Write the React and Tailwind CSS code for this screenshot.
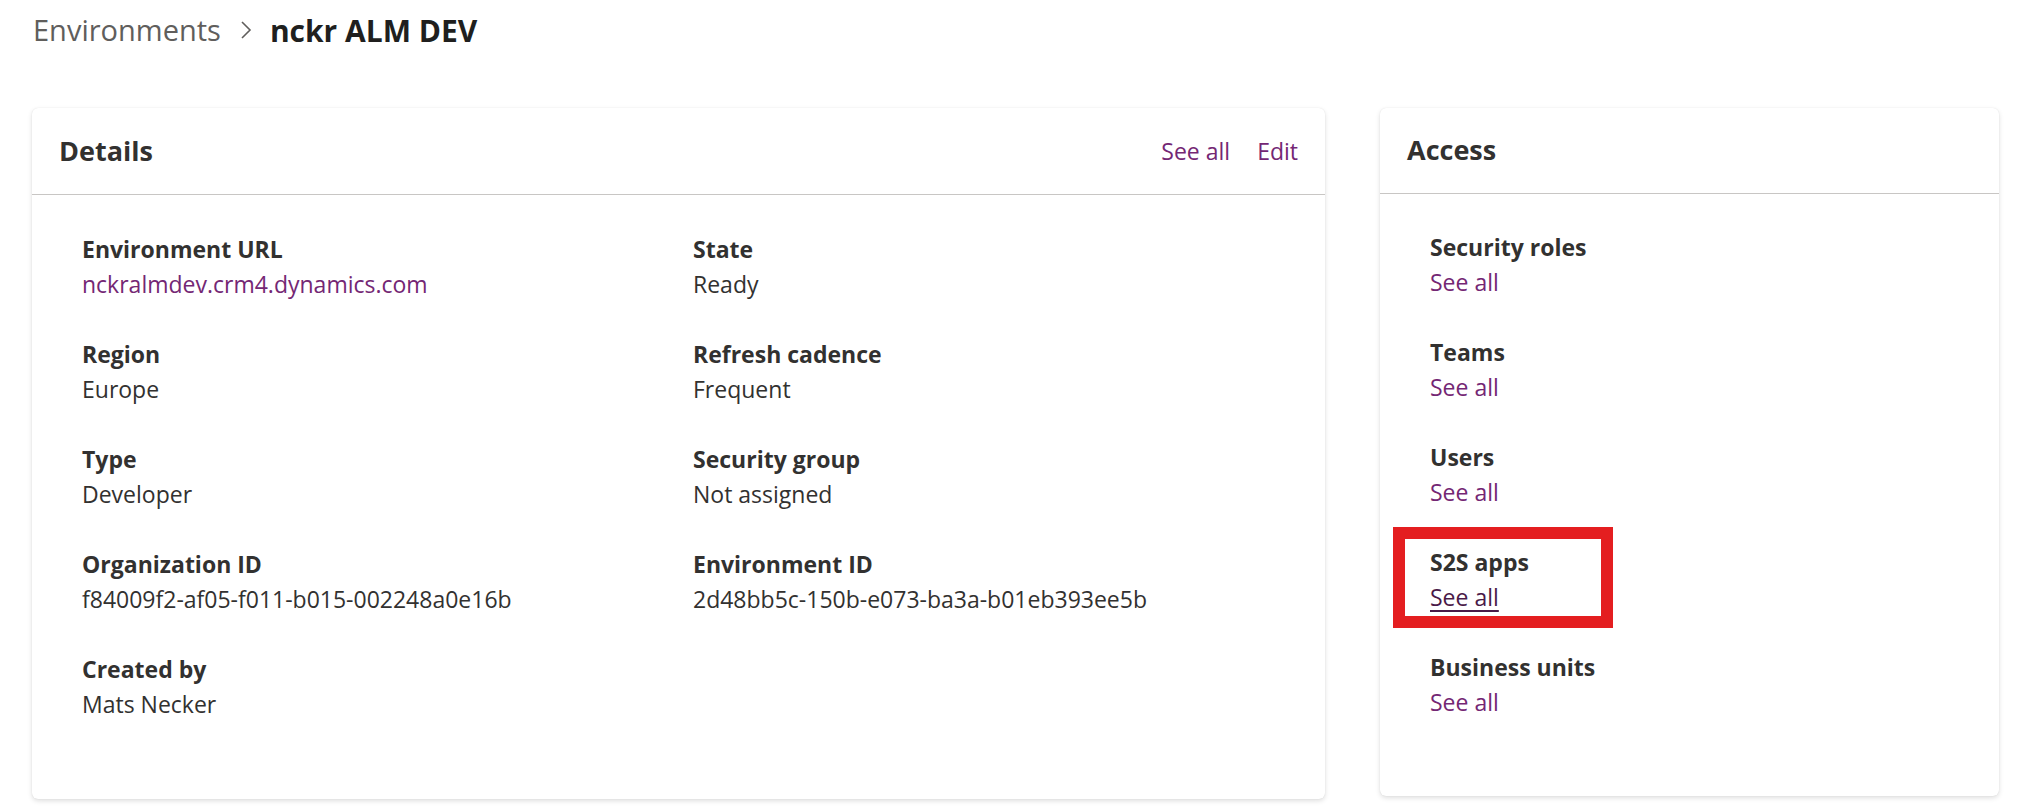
const DETAILS = [
  [
    { label: "Environment URL", value: "nckralmdev.crm4.dynamics.com", link: true },
    { label: "State", value: "Ready" },
  ],
  [
    { label: "Region", value: "Europe" },
    { label: "Refresh cadence", value: "Frequent" },
  ],
  [
    { label: "Type", value: "Developer" },
    { label: "Security group", value: "Not assigned" },
  ],
  [
    { label: "Organization ID", value: "f84009f2-af05-f011-b015-002248a0e16b" },
    { label: "Environment ID", value: "2d48bb5c-150b-e073-ba3a-b01eb393ee5b" },
  ],
  [{ label: "Created by", value: "Mats Necker" }],
]

const ACCESS = ["Security roles", "Teams", "Users", "S2S apps", "Business units"]

function Field({ label, value, link }) {
  return (
    <div className="text-[23px] leading-[35px]">
      <div className="font-bold text-[#323130]">{label}</div>
      <div className={link ? "text-[#742774]" : "text-[#323130]"}>{value}</div>
    </div>
  )
}

function Card({ title, actions, className, headerClass, children }) {
  return (
    <div
      className={`bg-white rounded-[6px] shadow-[0_2px_5px_rgba(0,0,0,0.13),0_0_1px_rgba(0,0,0,0.12)] ${className}`}
    >
      <div className={`flex items-center justify-between px-[27px] border-b border-[#c8c6c4] ${headerClass}`}>
        <h2 className="text-[27px] font-bold text-[#323130]">{title}</h2>
        {actions}
      </div>
      {children}
    </div>
  )
}

export default function App() {
  return (
    <div
      className="min-h-[808px] bg-white text-[#323130]"
      style={{ fontFamily: '"Open Sans", "Noto Sans", sans-serif' }}
    >
      {/* breadcrumb */}
      <div className="h-[60px] flex items-center pl-[33px] text-[29px]">
        <span className="text-[#605e5c]">Environments</span>
        <svg width="12" height="20" viewBox="0 0 12 20" className="ml-[19px] mr-[18px]">
          <path d="M2 2 L10 10 L2 18" fill="none" stroke="#605e5c" strokeWidth="1.6" />
        </svg>
        <span className="font-bold text-[30px] text-[#201f1e]">nckr ALM DEV</span>
      </div>

      <div className="flex items-start gap-[55px] pl-[32px] mt-[48px]">
        <Card
          title="Details"
          className="w-[1293px]"
          headerClass="h-[87px]"
          actions={
            <div className="flex gap-[27px] text-[23px] text-[#742774]">
              <span>See all</span>
              <span>Edit</span>
            </div>
          }
        >
          <div className="pl-[50px] pt-[37px] pb-[77px] flex flex-col gap-[35px]">
            {DETAILS.map((row, i) => (
              <div key={i} className="grid grid-cols-[611px_1fr]">
                {row.map((f) => (
                  <Field key={f.label} {...f} />
                ))}
              </div>
            ))}
          </div>
        </Card>

        <Card title="Access" className="w-[619px]" headerClass="h-[86px]">
          <div className="pl-[50px] pt-[36px] pb-[76px] flex flex-col gap-[35px]">
            {ACCESS.map((label) => {
              const marked = label === "S2S apps"
              return (
                <div key={label} className="relative text-[23px] leading-[35px]">
                  {marked && (
                    <div className="absolute -left-[37px] -top-[18px] w-[220px] h-[101px] border-[12px] border-[#e41e20]" />
                  )}
                  <div className="font-bold text-[#323130]">{label}</div>
                  <div
                    className={
                      marked
                        ? "text-[#4a1a48] underline decoration-[1.5px] underline-offset-[4px]"
                        : "text-[#742774]"
                    }
                  >
                    See all
                  </div>
                </div>
              )
            })}
          </div>
        </Card>
      </div>
    </div>
  )
}
